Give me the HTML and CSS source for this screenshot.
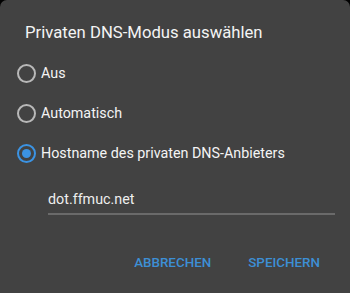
FILE: index.html
```html
<!DOCTYPE html>
<html lang="de">
<head>
<meta charset="utf-8">
<link rel="stylesheet" href="styles.css">
</head>
<body>
<div class="dialog">
  <h1 class="title">Privaten DNS-Modus auswählen</h1>
  <div class="options">
    <div class="option"><span class="radio"></span><span class="label">Aus</span></div>
    <div class="option"><span class="radio"></span><span class="label">Automatisch</span></div>
    <div class="option"><span class="radio checked"></span><span class="label">Hostname des privaten DNS-Anbieters</span></div>
  </div>
  <div class="field"><span class="value">dot.ffmuc.net</span></div>
  <div class="actions">
    <span class="btn">ABBRECHEN</span>
    <span class="btn">SPEICHERN</span>
  </div>
</div>
</body>
</html>
```
FILE: styles.css
```css
html, body {
  margin: 0;
  padding: 0;
  background: #000;
}
.dialog {
  width: 350px;
  height: 293px;
  background: #424242;
  border-radius: 7px 7px 0 0;
  box-sizing: border-box;
  padding: 22px 0 0 0;
  font-family: Roboto, "Noto Sans", sans-serif;
  color: #f2f2f2;
  display: flex;
  flex-direction: column;
}
.title {
  margin: 0 0 0 25px;
  font-size: 16.7px;
  font-weight: 400;
  line-height: 22px;
  color: #f4f4f4;
}
.options {
  display: flex;
  flex-direction: column;
  margin-top: 19px;
  padding-left: 17px;
  gap: 20px;
}
.option {
  display: flex;
  align-items: center;
  height: 20px;
}
.radio {
  width: 15px;
  height: 15px;
  border: 2px solid #b8b8b8;
  border-radius: 50%;
  box-sizing: content-box;
  display: flex;
  align-items: center;
  justify-content: center;
  margin-right: 5px;
}
.radio.checked {
  border-color: #3b93e3;
}
.radio.checked::after {
  content: "";
  width: 9px;
  height: 9px;
  border-radius: 50%;
  background: #3b93e3;
}
.label {
  font-size: 14.3px;
  color: #f4f4f4;
}
.field {
  margin: 26px 15px 0 48px;
  padding-bottom: 5px;
  border-bottom: 2px solid #6a6a6a;
}
.value {
  font-size: 14.3px;
  color: #eeeeee;
}
.actions {
  display: flex;
  justify-content: flex-end;
  gap: 37px;
  padding-right: 30px;
  margin-top: 40px;
}
.btn {
  font-size: 13.4px;
  font-weight: 500;
  color: #3d8fd5;
}
```
